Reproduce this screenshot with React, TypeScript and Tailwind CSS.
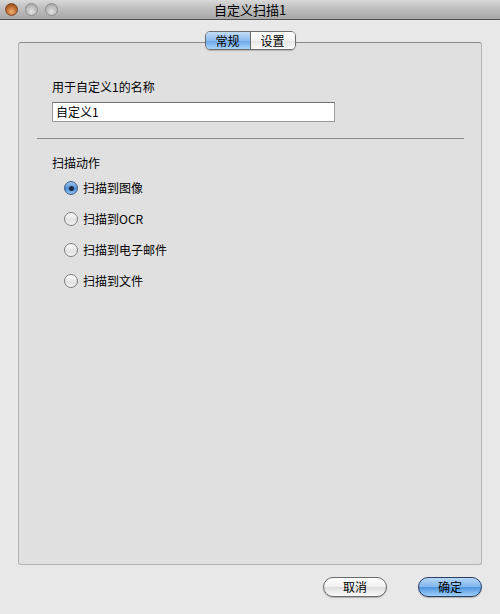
import React from "react";

const font = { fontFamily: '"Lucida Grande", "Noto Sans CJK SC", "Noto Sans", sans-serif' };

function Light({ color }: { color: "red" | "gray" }) {
  return (
    <div
      className={
        color === "red"
          ? "w-[13px] h-[13px] rounded-full border border-[#7a4a2a] bg-[radial-gradient(circle_at_50%_70%,#f0b070,#b8622c_60%,#7a3a18)]"
          : "w-[13px] h-[13px] rounded-full border border-[#8e8e8e] bg-[radial-gradient(circle_at_50%_70%,#e4e4e4,#b8b8b8_60%,#9a9a9a)]"
      }
    />
  );
}

function Radio({ checked, label }: { checked?: boolean; label: string }) {
  return (
    <div className="flex items-center gap-[5px] h-[16px]">
      {checked ? (
        <div className="w-[14px] h-[14px] rounded-full border border-[#3d5c86] bg-[linear-gradient(#9cc6ee,#4f8fd6_55%,#8fc4f4)] flex items-center justify-center">
          <div className="w-[5px] h-[5px] rounded-full bg-[#1b2a3e]" />
        </div>
      ) : (
        <div className="w-[14px] h-[14px] rounded-full border border-[#7d7d7d] bg-[linear-gradient(#fefefe,#e2e2e2_60%,#f4f4f4)]" />
      )}
      <span className="text-[12px] text-black leading-[16px]">{label}</span>
    </div>
  );
}

export default function App() {
  return (
    <div className="w-[500px] h-[614px] bg-[#e8e8e8] flex flex-col overflow-hidden" style={font}>
      {/* title bar */}
      <div className="h-[20px] shrink-0 border-b border-[#515151] bg-[linear-gradient(#d8d8d8,#bcbcbc_50%,#a8a8a8)] relative flex items-center">
        <div className="flex items-center gap-[7px] pl-[5px]">
          <Light color="red" />
          <Light color="gray" />
          <Light color="gray" />
        </div>
        <div className="absolute inset-0 flex items-center justify-center text-[13px] text-black leading-none">
          自定义扫描1
        </div>
      </div>

      <div className="flex flex-col px-[18px] pt-[11px]">
        {/* tabs */}
        <div className="flex justify-center relative z-10 h-[19px]">
          <div className="flex h-[19px] rounded-[5px] border border-[#6d6d6d] overflow-hidden shadow-[0_1px_1px_rgba(0,0,0,0.2)]">
            <div className="w-[45px] flex items-center justify-center text-[12px] leading-none text-black bg-[linear-gradient(#c4dcf6,#8bbbee_50%,#6aa6e8_52%,#a9d3fa)] border-r border-[#6d6d6d]">
              常规
            </div>
            <div className="w-[44px] flex items-center justify-center text-[12px] leading-none text-black bg-[linear-gradient(#ffffff,#f2f2f2_50%,#e6e6e6_52%,#fafafa)]">
              设置
            </div>
          </div>
        </div>

        {/* panel */}
        <div className="-mt-[8px] h-[523px] rounded-[3px] border border-[#b4b4b4] border-t-[#8a8a8a] bg-[#e0e0e0] flex flex-col pt-[36px]">
          <div className="pl-[33px] flex flex-col">
            <div className="text-[12px] leading-[16px] text-black">用于自定义1的名称</div>
            <div className="mt-[7px] w-[283px] h-[20px] bg-white border border-[#9a9a9a] border-t-[#707070] flex items-center pl-[3px] text-[12px] text-black">
              自定义1
            </div>
          </div>
          <div className="mt-[16px] ml-[18px] mr-[17px] h-px bg-[#8c8c8c]" />
          <div className="pl-[33px] mt-[16px] flex flex-col">
            <div className="text-[12px] leading-[16px] text-black">扫描动作</div>
            <div className="pl-[12px] mt-[9px] flex flex-col gap-[15px]">
              <Radio checked label="扫描到图像" />
              <Radio label="扫描到OCR" />
              <Radio label="扫描到电子邮件" />
              <Radio label="扫描到文件" />
            </div>
          </div>
        </div>

        {/* buttons */}
        <div className="flex justify-end gap-[31px] mt-[12px]">
          <button className="w-[64px] h-[20px] rounded-full border border-[#6a6a6a] bg-[linear-gradient(#ffffff,#f0f0f0_50%,#dedede_52%,#fafafa)] text-[12px] leading-none text-black shadow-[0_1px_1px_rgba(0,0,0,0.25)]">
            取消
          </button>
          <button className="w-[64px] h-[20px] rounded-full border border-[#2a3f66] bg-[linear-gradient(#b6d6f6,#7fb5ec_50%,#4f95e0_52%,#9fd0fa)] text-[12px] leading-none text-black shadow-[0_1px_1px_rgba(0,0,0,0.25)]">
            确定
          </button>
        </div>
      </div>
    </div>
  );
}
